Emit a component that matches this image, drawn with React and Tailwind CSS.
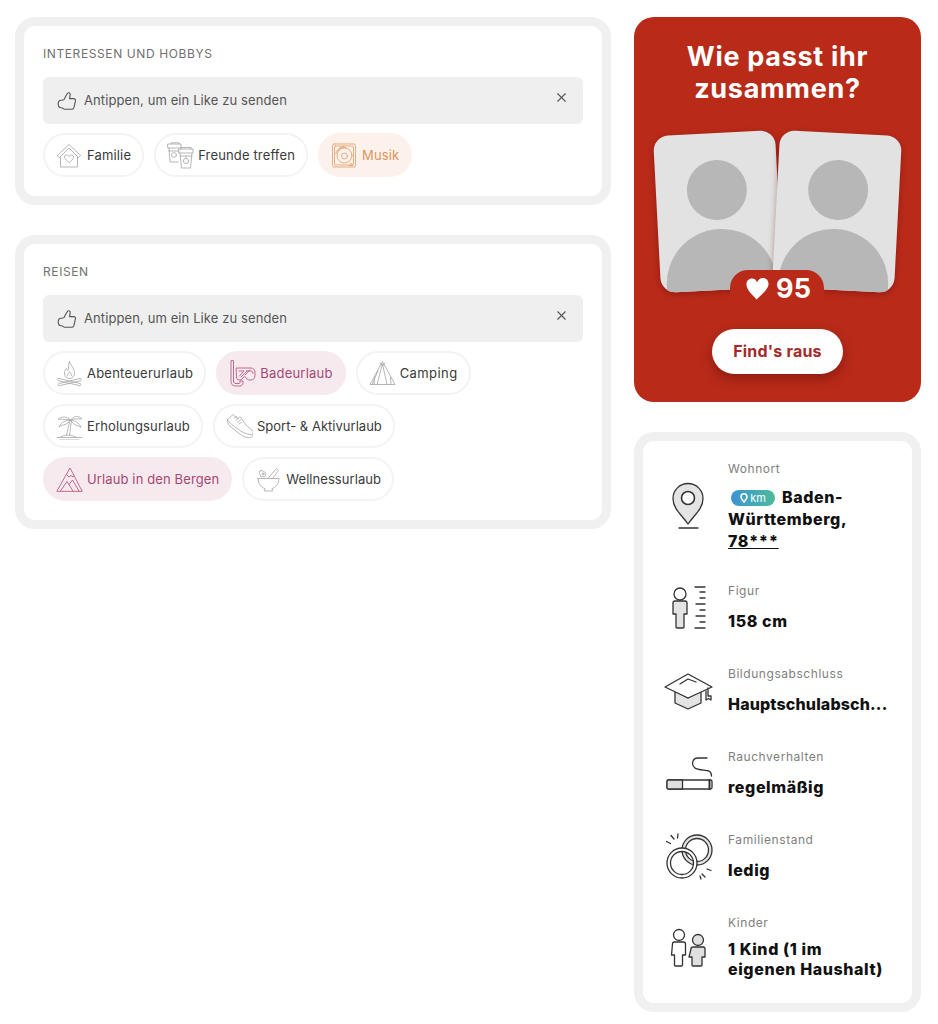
import React from "react";
import { X } from "lucide-react";

const Thumb = () => (
  <svg width="20" height="20" viewBox="0 0 20 20" fill="none" stroke="#555" strokeWidth="1.1" strokeLinejoin="round" className="shrink-0">
    <path d="M7 8.6 L10 3 C10.7 1 13.4 1.4 13.2 3.6 L12.6 7.6 H16.8 C18.3 7.6 18.8 9 18.4 10.1 L17 16.4 C16.6 17.8 16 18.2 15 18.2 H7.5 C6.5 18.2 6 16.8 4.2 16.8 C2.2 16.8 1.2 14.8 1.2 12.8 C1.2 10.8 2.4 9.2 4.2 9.2 C5.2 9.2 6.2 9.2 7 8.6 Z" />
  </svg>
);

const C = ({ children, color = "#aaa" }) => (
  <svg width="27" height="27" viewBox="0 0 27 27" fill="none" stroke={color} strokeWidth="0.85" strokeLinejoin="round" strokeLinecap="round" className="shrink-0">
    {children}
  </svg>
);

const Icons = {
  home: (
    <C>
      <path d="M1.5 13.5 L13 2.5 L24.5 13.5 M3.5 15.5 L13 6 L22.5 15.5 M1.5 13.5 L3.5 15.5 M24.5 13.5 L22.5 15.5" />
      <path d="M4.5 15 V25 H21.5 V15" />
      <path d="M13 20.5 L8.8 16.5 C7.6 14.8 9 12.6 11 13 C12 13.2 12.6 13.8 13 14.5 C13.4 13.8 14 13.2 15 13 C17 12.6 18.4 14.8 17.2 16.5 Z" />
    </C>
  ),
  cups: (
    <C>
      <path d="M1 2 H14 V6 H1 Z M2 6 L3 20 H11 M4 2 V0.8 H12 V2 M1.5 9 H12" />
      <circle cx="7" cy="13" r="2.4" />
      <path d="M12 7 H26 V11 H12 Z M13 11 L14.5 26 H23.5 L25 11 M14 7 V5.5 H24 V7 M13 14 H25" />
      <circle cx="19" cy="19" r="2.6" />
      <path d="M19 14 V16.4" />
    </C>
  ),
  disc: (
    <C color="#e0a273">
      <rect x="1.5" y="2" width="23" height="23" rx="1.5" />
      <rect x="3.5" y="4" width="19" height="19" rx="1" />
      <circle cx="13.5" cy="13.5" r="7.5" />
      <circle cx="13.5" cy="14" r="3" />
      <path d="M6.5 9 C8.5 6 12 5 15 5.6 M4.8 12 C5.5 8 9 4.5 13 4.4 M19 21 L22 23" />
      <path d="M18 23.5 H21" />
    </C>
  ),
  fire: (
    <C>
      <path d="M13.5 1.5 C14 5 18.5 8 18.5 13 C18.5 16.5 16 18.5 13.5 18.5 C11 18.5 8.5 16.5 8.5 13 C8.5 11 9.5 9.5 10.5 8.5 C11 10 11.5 10.5 12 10.5 C12.5 7.5 12.5 4 13.5 1.5 Z" />
      <path d="M11.5 15.5 C11.5 14 13 13 13.5 11.5 C14.5 13 15.5 14 15.5 15.5" />
      <path d="M3 18.5 L24 23.5 C25.5 24 25 26 23.5 25.6 L2.5 20.8 C1 20.4 1.5 18.2 3 18.5 Z" />
      <path d="M24 18.5 L3 23.5 C1.5 24 2 26 3.5 25.6 L24.5 20.8 C26 20.4 25.5 18.2 24 18.5 Z" />
    </C>
  ),
  snorkel: (
    <C color="#b9527c">
      <path d="M2 1 V21.5 C2 24.5 4 26 6.5 26 H11 C13 26 14 24.5 14 23 V21 H11 V22.5 C11 23 10.7 23.5 10 23.5 H7 C5.5 23.5 4.5 22.5 4.5 21 V1 Z" />
      <path d="M7.5 8 H22 C24.5 8 26 10 26 12.5 V15.5 C26 18 24.5 20 22 20 H20 C18.5 20 17.8 18.5 16.5 17 C16 16.5 15 16.5 14.5 17 C13.5 18.5 12.5 20 11 20 H10 C8.5 20 7.5 19 7.5 17.5 Z" />
      <path d="M10 11 H15 L10.5 16 M17.5 11 H22 C23.5 11 24 12 24 13.5 M12 17 L18 11 M16 15 L21 10" />
    </C>
  ),
  tent: (
    <C>
      <path d="M13.5 1.5 L26 24.5 H1 L13.5 1.5" />
      <path d="M13.5 4 L8 24.5 M13.5 4 L18 24.5 M11 3 L13.5 6 L16 3" />
      <path d="M5.5 17 L5 24.5 M21.5 17 L22 24.5 M9 11 L3 24.5" />
    </C>
  ),
  palm: (
    <C>
      <path d="M14 7 C13 12 11.5 17 10.5 22 M15.5 7.5 C15 12 14 17 13.5 22" />
      <path d="M14.5 7 C11 3 5.5 3 2 6.5 C5 5.5 6 6.5 8 6.5 C10 6.5 12 6 14.5 7 Z" />
      <path d="M14.5 7 C18 2.5 23 2.5 26 6 C23.5 5.5 22 6 20 6 C18 6 16.5 6.3 14.5 7 Z" />
      <path d="M14 7.5 C10 7 5 9 3 14 C6 12 7 12 9 11.5 C11 11 13 9.5 14 7.5 Z" />
      <path d="M15 7.5 C19 7.5 23.5 10 25 14.5 C22.5 12.5 21 12.5 19.5 12 C17.5 11 16 9.5 15 7.5 Z" />
      <path d="M4 24.5 C7 21.5 16 21 20.5 24.5 M1 24.5 H26 M4 27 H23" />
    </C>
  ),
  shoe: (
    <C>
      <path d="M1.5 6.5 L7 1.5 C8 2.5 10 4.5 12 5.5 C13 4.5 13.5 4 14.5 4 L20 12 C22 14.5 26 16 27 18.5 C27.5 20 27 21.5 25.5 21.5 C20 21.5 16 19 12 16 C7 12.5 3 10 1.5 6.5 Z" />
      <path d="M1.5 7 C1 9 2 11 4 13 C9 17 15 23 21 24.5 C24 25.2 27 24 27 21.5" />
      <path d="M8.5 5 L11 3.5 M10 7 L12.5 5.5 M11.5 9 L14.5 7 M13 11 L16 9" />
    </C>
  ),
  mountain: (
    <C color="#b9527c">
      <path d="M1 25 L10 9 L14 2 L18.5 10.5 L26 25 Z" />
      <path d="M10.5 8.5 L13 11 L15 9.5 L17 11 L18.2 10" />
      <path d="M4.5 25 L11 15.5 L17 25 M13 18.5 L16.5 14 L23 25" />
    </C>
  ),
  bowl: (
    <C>
      <path d="M3 12.5 H24 C24 18 20.5 21.5 17 22.5 L17.5 25 H9.5 L10 22.5 C6.5 21.5 3 18 3 12.5 Z" />
      <path d="M13 12.5 L20.5 3.5 C21.5 2 24 3.5 23 5.2 L17.5 12.5" />
      <path d="M5 5 C6.5 4 8 4.5 8.5 6 C10 5.5 11.5 7 10.5 8.5 C11 10 9.5 11.5 8 10.5 C6.5 11.5 5 10.5 5.5 9 C4 8.5 3.8 6 5 5 Z" />
      <circle cx="8" cy="8" r="1" />
    </C>
  ),
};

const Chip = ({ icon, label, tone, t = "tracking-[0.15px]" }) => {
  const cls =
    tone === "pink"
      ? "bg-[#f7eaef] text-[#a8466f] border-[#f7eaef]"
      : tone === "orange"
      ? "bg-[#fcf2eb] text-[#dd9560] border-[#fcf2eb]"
      : "bg-white text-[#3a3a3a] border-[#f3f3f3]";
  return (
    <div className={`flex h-[44px] items-center gap-[4px] rounded-full border-2 pl-[11px] pr-[11px] text-[13px] ${t} ${cls}`}>
      {Icons[icon]}
      <span className="whitespace-nowrap pt-[1px]">{label}</span>
    </div>
  );
};

const Hint = () => (
  <div className="mb-[9px] flex h-[47px] items-center rounded-[6px] bg-[#efefef] pl-[14px] pr-[14px] text-[#555]">
    <Thumb />
    <span className="ml-[7px] flex-1 text-[13px] tracking-[0.1px]">Antippen, um ein Like zu senden</span>
    <X size={15} strokeWidth={1.8} color="#555" className="-mt-[6px]" />
  </div>
);

const Section = ({ title, children }) => (
  <section className="rounded-[20px] border-[9px] border-[#f0f0f0] bg-white px-[19px] pb-[19px] pt-[19px]">
    <h2 className="mb-[14px] h-[18px] text-[12px] leading-[18px] tracking-[0.6px] text-[#707070]">{title}</h2>
    <Hint />
    {children}
  </section>
);

const D = ({ children, h = 48 }) => (
  <svg width="50" height={h} viewBox={`0 0 50 ${h}`} fill="none" stroke="#333" strokeWidth="1.3" strokeLinejoin="round" strokeLinecap="round" className="shrink-0 translate-y-[2px]">
    {children}
  </svg>
);

const Big = {
  pin: (
    <D>
      <path d="M24 42 C18 33 9 27 9 16.5 a15 15 0 0 1 30 0 C39 27 30 33 24 42 Z" fill="#e4e4e4" />
      <circle cx="24" cy="16" r="6.5" fill="#fff" strokeWidth="1.6" />
      <path d="M15 46 H34" />
    </D>
  ),
  figure: (
    <D>
      <circle cx="16" cy="10" r="6" />
      <path d="M9 19 a2 2 0 0 1 2 -2 h10 a2 2 0 0 1 2 2 v11 h-3 v13 a1 1 0 0 1 -1 1 h-6 a1 1 0 0 1 -1 -1 v-13 h-3 z" fill="#e4e4e4" />
      <path d="M31 3 H41 M36 8 H41 M36 14 H41 M32 20 H41 M36 26 H41 M32 32 H41 M36 38 H41 M31 44 H41" />
    </D>
  ),
  cap: (
    <D>
      <path d="M11 24 V36 L24 42 L37 36 V24 L24 31 Z" fill="#e4e4e4" />
      <path d="M1 20 L24 7 L48 20 L24 31 Z" fill="#fff" />
      <path d="M16 17 L24 12 L32 15" />
      <path d="M44 21 V29 H47 V33 L44.5 31.5 L42 33 V24" />
    </D>
  ),
  cig: (
    <D>
      <rect x="3" y="30" width="45" height="9" rx="1.5" fill="#fff" />
      <path d="M4.5 30 H18.5 V39 H4.5 C3.6 39 3 38.4 3 37.5 V31.5 C3 30.6 3.6 30 4.5 30 Z" fill="#e0e0e0" />
      <path d="M45.5 30 V39" strokeWidth="2" />
      <path d="M43 8 H34 C28 8 27 15 31 18 C33 20 41 20 45 21 C47 22 47.5 24 47.5 26" />
    </D>
  ),
  rings: (
    <D>
      <path fillRule="evenodd" d="M18 17 a15 15 0 1 0 30 0 a15 15 0 1 0 -30 0 Z M21.5 17 a11.5 11.5 0 1 0 23 0 a11.5 11.5 0 1 0 -23 0 Z" fill="#e4e4e4" />
      <path fillRule="evenodd" d="M3 30 a15 15 0 1 0 30 0 a15 15 0 1 0 -30 0 Z M6.5 30 a11.5 11.5 0 1 0 23 0 a11.5 11.5 0 1 0 -23 0 Z" fill="#fff" />
      <path d="M2.5 8.5 L6.5 10.5 M7 2.5 L10 6 M14 1 L13.5 5 M38 41 L41 44 M43 36 L47 37.5 M37 46 L36 43" />
    </D>
  ),
  kids: (
    <D>
      <circle cx="15" cy="11" r="5.5" />
      <path d="M8.5 20 a2 2 0 0 1 2 -2 h9 a2 2 0 0 1 2 2 v11 h-3 v10 a1 1 0 0 1 -1 1 h-6 a1 1 0 0 1 -1 -1 v-10 h-3 z" />
      <circle cx="34" cy="16" r="5.5" fill="#e0e0e0" />
      <path d="M27 25 a2 2 0 0 1 2 -2 h10 a2 2 0 0 1 2 2 v8 h-3 v8 a1 1 0 0 1 -1 1 h-8 a1 1 0 0 1 -1 -1 v-8 h-3 z" fill="#e0e0e0" />
    </D>
  ),
};

const Row = ({ icon, label, children, className = "" }) => (
  <div className={`flex items-center gap-[14px] ${className}`}>
    {Big[icon]}
    <div className="w-[164px] self-start">
      <div className="h-[20px] pt-[1px] text-[12px] leading-[20px] tracking-[0.55px] text-[#808080]">{label}</div>
      {children}
    </div>
  </div>
);

const valueCls = "text-[16px] font-extrabold leading-[22px] tracking-[0.6px] text-[#111]";

const Photo = ({ className }) => (
  <div className={`absolute top-[28px] h-[157px] w-[122px] overflow-hidden rounded-[15px] bg-[#e2e2e2] shadow-[0_2px_6px_rgba(80,0,0,0.35)] ${className}`}>
    <div className="absolute left-[31px] top-[27px] h-[60px] w-[60px] rounded-full bg-[#b7b7b7]"></div>
    <div className="absolute left-[6px] top-[96px] h-[110px] w-[110px] rounded-full bg-[#b7b7b7]"></div>
  </div>
);

export default function App() {
  return (
    <div className="flex min-h-[1024px] items-start gap-[23px] bg-white pl-[15px] pt-[17px] font-['Inter',sans-serif]">
      <div className="flex w-[596px] shrink-0 flex-col gap-[30px]">
        <Section title="INTERESSEN UND HOBBYS">
          <div className="flex gap-[10px]">
            <Chip icon="home" label="Familie" />
            <Chip icon="cups" label="Freunde treffen" />
            <Chip icon="disc" label="Musik" tone="orange" />
          </div>
        </Section>
        <Section title="REISEN">
          <div className="flex flex-col gap-[9px]">
            <div className="flex gap-[10px]">
              <Chip icon="fire" label="Abenteuerurlaub" t="tracking-[0.22px]" />
              <Chip icon="snorkel" label="Badeurlaub" tone="pink" t="tracking-[0.22px]" />
              <Chip icon="tent" label="Camping" t="tracking-[0.42px]" />
            </div>
            <div className="flex gap-[10px]">
              <Chip icon="palm" label="Erholungsurlaub" />
              <Chip icon="shoe" label="Sport- & Aktivurlaub" t="tracking-[0.02px]" />
            </div>
            <div className="flex gap-[10px]">
              <Chip icon="mountain" label="Urlaub in den Bergen" tone="pink" t="tracking-[0.12px]" />
              <Chip icon="bowl" label="Wellnessurlaub" t="tracking-[0.06px]" />
            </div>
          </div>
        </Section>
      </div>

      <div className="flex w-[287px] shrink-0 flex-col gap-[30px]">
        <div className="flex flex-col items-center rounded-[20px] bg-[#b92a19] pb-[28px] pt-[24px]">
          <h1 className="text-center text-[27px] font-bold leading-[32px] tracking-[0.7px] text-white">
            Wie passt ihr
            <br />
            zusammen?
          </h1>
          <div className="relative h-[224px] w-full">
            <Photo className="left-[23px] -rotate-[3deg]" />
            <Photo className="left-[142px] rotate-[3deg]" />
            <div className="absolute left-[96px] top-[165px] flex h-[40px] w-[94px] items-start justify-center gap-[7px] rounded-t-[18px] bg-[#b92a19] pl-[3px] pt-[3px]">
              <svg width="23" height="23" viewBox="0 0 24 24" fill="#fff" className="mt-[4px]">
                <path d="M11 23.5 C7 18.5 0.5 14 0.5 7.5 C0.5 3.5 3.5 1.5 6.5 1.5 C9 1.5 10.5 3 11.5 5.5 C13 2.5 15 1 17.5 1 C21 1 23.5 3.5 23.5 7 C23.5 13 16 18 11 23.5 Z" />
              </svg>
              <span className="text-[27px] font-bold leading-[32px] text-white">95</span>
            </div>
          </div>
          <button className="h-[45px] w-[131px] rounded-full bg-white pb-[2px] text-[16px] font-bold tracking-[0.2px] text-[#a52a2a] shadow-[0_5px_12px_rgba(60,0,0,0.35)]">
            Find's raus
          </button>
        </div>

        <div className="flex flex-col gap-[31px] rounded-[20px] border-[9px] border-[#f0f0f0] bg-white pb-[24px] pl-[21px] pt-[17px]">
          <Row icon="pin" label="Wohnort" className="h-[91px]">
            <div className={`mt-[8px] ${valueCls}`}>
              <span className="ml-[3px] mr-[7px] inline-flex h-[16px] w-[44px] items-center justify-center gap-[2px] rounded-full bg-gradient-to-r from-[#3f93d3] to-[#4dbb98] align-[0px] text-[11px] font-normal leading-none tracking-normal text-white">
                <svg width="8" height="10" viewBox="0 0 8 10" fill="none" stroke="#fff" strokeWidth="1.6">
                  <path d="M4 9 C2.5 7 1 5.5 1 3.8 a3 3 0 0 1 6 0 C7 5.5 5.5 7 4 9 Z" />
                </svg>
                km
              </span>
              Baden-
              <br />
              Württemberg,
              <br />
              <span className="underline">78***</span>
            </div>
          </Row>
          <Row icon="figure" label="Figur">
            <div className={`mt-[10px] ${valueCls}`}>158 cm</div>
          </Row>
          <Row icon="cap" label="Bildungsabschluss">
            <div className="mt-[10px] whitespace-nowrap text-[16px] font-extrabold leading-[22px] tracking-[0.15px] text-[#111]">Hauptschulabsch...</div>
          </Row>
          <Row icon="cig" label="Rauchverhalten">
            <div className={`mt-[10px] ${valueCls}`}>regelmäßig</div>
          </Row>
          <Row icon="rings" label="Familienstand">
            <div className={`mt-[10px] ${valueCls}`}>ledig</div>
          </Row>
          <Row icon="kids" label="Kinder">
            <div className="mt-[7px] text-[16px] font-extrabold leading-[20px] tracking-[0.6px] text-[#111]">
              1 Kind (1 im
              <br />
              eigenen Haushalt)
            </div>
          </Row>
        </div>
      </div>
    </div>
  );
}
